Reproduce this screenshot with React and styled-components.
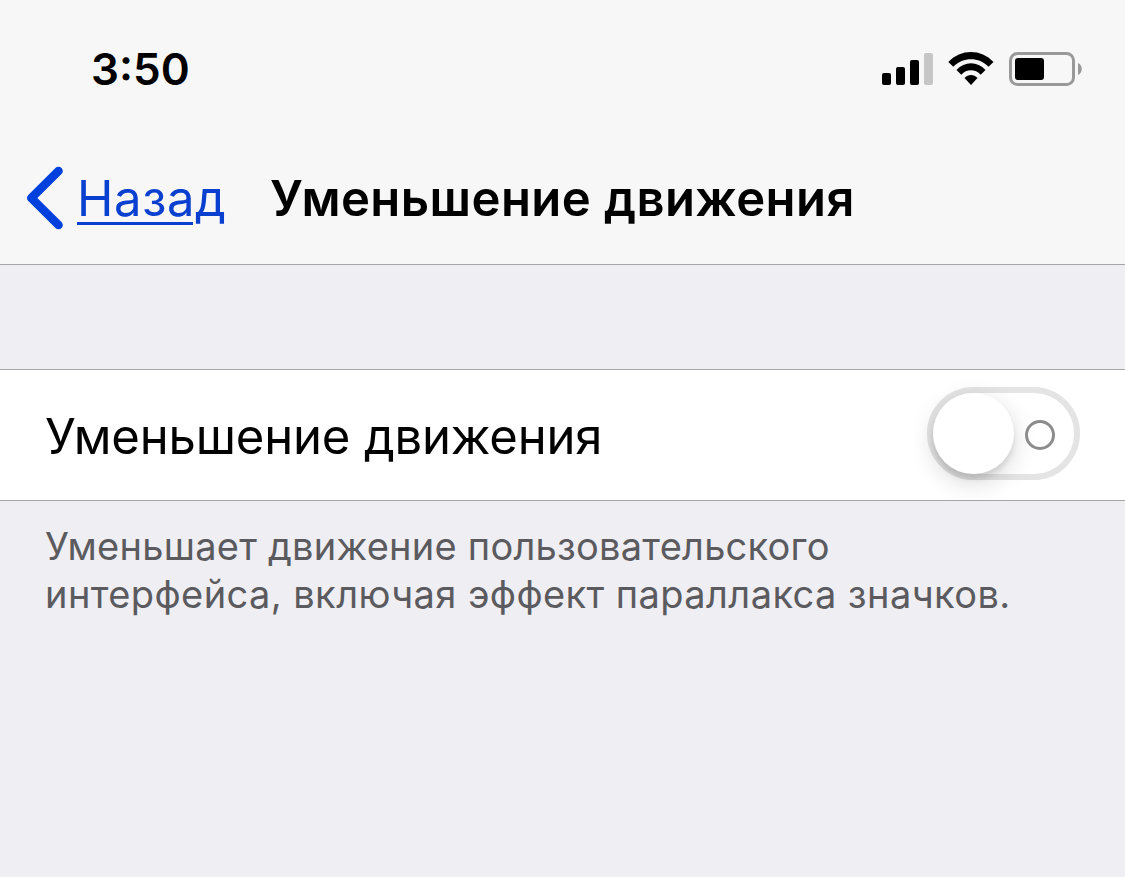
import styled, { createGlobalStyle } from 'styled-components';

const GlobalStyle = createGlobalStyle`
  * {
    box-sizing: border-box;
  }
  body {
    margin: 0;
    background-color: #efeef3;
    font-family: Inter, "Liberation Sans", sans-serif;
    color: #000;
  }
`;

const Screen = styled.div`
  height: 877px;
  background-color: #efeef3;
  overflow: hidden;
`;

const Header = styled.header`
  height: 265px;
  background-color: #f7f7f7;
  border-bottom: 1px solid #a5a5a8;
`;

const StatusBar = styled.div`
  display: flex;
  align-items: center;
  justify-content: space-between;
  height: 138px;
  padding: 0 43px 0 91px;
  .time {
    font-size: 44px;
    font-weight: 600;
    line-height: 54px;
  }
  .icons {
    display: flex;
    align-items: center;
    gap: 15px;
  }
`;

const NavBar = styled.nav`
  display: flex;
  align-items: center;
  height: 121px;
  padding-left: 26px;
`;

const BackLink = styled.a`
  display: flex;
  align-items: center;
  width: 244px;
  color: #0a40d0;
  cursor: pointer;
  svg {
    margin: 0 13px 1px 0;
  }
  span {
    font-size: 49px;
    line-height: 60px;
    letter-spacing: 0.6px;
    text-decoration: underline;
    text-decoration-thickness: 3px;
    text-underline-offset: 6px;
  }
`;

const Title = styled.h1`
  margin: 0;
  font-size: 49px;
  font-weight: 600;
  line-height: 60px;
  letter-spacing: 0.42px;
  white-space: nowrap;
`;

const SettingRow = styled.div`
  display: flex;
  align-items: center;
  justify-content: space-between;
  height: 132px;
  margin-top: 104px;
  padding: 0 45px 3px 45px;
  background-color: #fff;
  border: solid #a5a5a8;
  border-width: 1px 0;
  .label {
    padding-top: 6px;
    font-size: 49px;
    line-height: 60px;
    letter-spacing: -0.16px;
    white-space: nowrap;
  }
`;

const Switch = styled.button`
  display: flex;
  align-items: center;
  justify-content: space-between;
  width: 153px;
  height: 93px;
  padding: 0 19px 0 0;
  background-color: #fff;
  border: 6px solid #e4e4e4;
  border-radius: 47px;
`;

const Knob = styled.span`
  width: 81px;
  height: 81px;
  border-radius: 50%;
  background-color: #fff;
  box-shadow: 0 8px 24px rgba(0, 0, 0, 0.16), 0 5px 5px rgba(0, 0, 0, 0.09);
`;

const OffMark = styled.span`
  width: 30px;
  height: 30px;
  margin-top: 3px;
  border: 3px solid #8c8c8c;
  border-radius: 50%;
`;

const Description = styled.p`
  margin: 0;
  padding: 21px 45px 0;
  color: #5b5b5f;
  font-size: 38px;
  line-height: 48px;
  white-space: nowrap;
`;

const Line = styled.span`
  display: block;
  letter-spacing: ${({ $spacing }) => $spacing};
`;

function SignalIcon() {
  return (
    <svg width="51" height="34" viewBox="0 0 51 34">
      <rect x="0" y="21" width="9" height="12" rx="2" />
      <rect x="14" y="15" width="9" height="18" rx="2" />
      <rect x="28" y="8" width="9" height="25" rx="2" />
      <rect x="42" y="1" width="9" height="32" rx="2" fill="#c6c6c6" />
    </svg>
  );
}

function WifiIcon() {
  return (
    <svg width="46" height="34" viewBox="0 0 46 34">
      <path d="M0.3 10 C13 -3.3 33 -3.3 45.5 10 L40.5 14.7 C31 4.8 15 4.8 5.3 14.7 Z" />
      <path d="M8.5 18 C16.5 9 29.5 9 37.5 18 L32.7 22.7 C27.5 16.8 18.5 16.8 13.3 22.7 Z" />
      <path d="M16.5 26 C20 22 26 22 29.5 26 L23 33 Z" />
    </svg>
  );
}

function BatteryIcon() {
  return (
    <svg width="73" height="34" viewBox="0 0 73 34">
      <rect x="1.5" y="1.5" width="63" height="31" rx="7" fill="none" stroke="#999" strokeWidth="3" />
      <rect x="6" y="6" width="29" height="22" rx="3" />
      <path d="M69 11 C74 13 74 21 69 23 Z" fill="#999" />
    </svg>
  );
}

export default function App() {
  return (
    <Screen>
      <GlobalStyle />
      <Header>
        <StatusBar>
          <div className="time">3:50</div>
          <div className="icons">
            <SignalIcon />
            <WifiIcon />
            <BatteryIcon />
          </div>
        </StatusBar>
        <NavBar>
          <BackLink>
            <svg width="38" height="64" viewBox="0 0 38 64" fill="none" stroke="#0040dd" strokeWidth="8.6" strokeLinecap="round" strokeLinejoin="round">
              <path d="M32.5 5 L5.3 32 L32.5 59" />
            </svg>
            <span>Назад</span>
          </BackLink>
          <Title>Уменьшение движения</Title>
        </NavBar>
      </Header>
      <SettingRow>
        <span className="label">Уменьшение движения</span>
        <Switch type="button" role="switch" aria-checked="false">
          <Knob />
          <OffMark />
        </Switch>
      </SettingRow>
      <Description>
        <Line $spacing="0.24px">Уменьшает движение пользовательского</Line>
        <Line $spacing="0.41px">интерфейса, включая эффект параллакса значков.</Line>
      </Description>
    </Screen>
  );
}
